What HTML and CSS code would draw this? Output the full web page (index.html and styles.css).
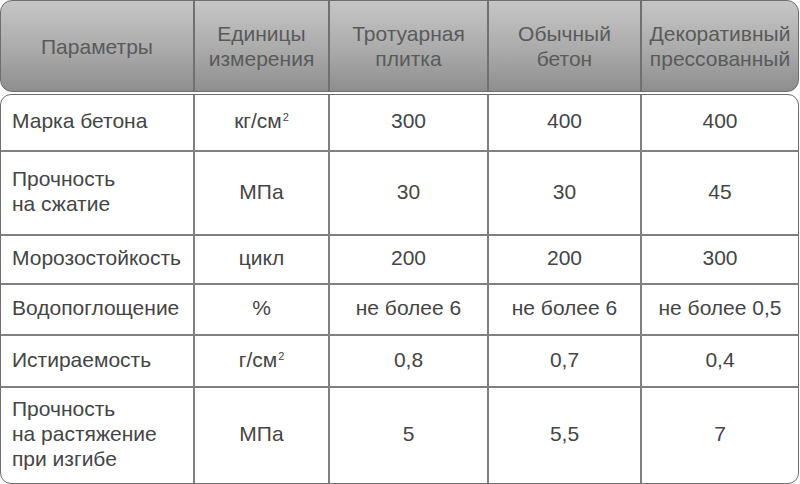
FILE: index.html
```html
<!DOCTYPE html>
<html lang="ru">
<head>
<meta charset="utf-8">
<link rel="stylesheet" href="styles.css">
</head>
<body>
<div class="table">
  <div class="head grid">
    <div class="cell">Параметры</div>
    <div class="cell">Единицы<br>измерения</div>
    <div class="cell">Тротуарная<br>плитка</div>
    <div class="cell">Обычный<br>бетон</div>
    <div class="cell">Декоративный<br>прессованный</div>
  </div>
  <div class="body">
    <div class="grid row r1">
      <div class="cell first">Марка бетона</div>
      <div class="cell"><span>кг/см<sup>2</sup></span></div>
      <div class="cell">300</div>
      <div class="cell">400</div>
      <div class="cell">400</div>
    </div>
    <div class="grid row r2">
      <div class="cell first">Прочность<br>на сжатие</div>
      <div class="cell">МПа</div>
      <div class="cell">30</div>
      <div class="cell">30</div>
      <div class="cell">45</div>
    </div>
    <div class="grid row r3">
      <div class="cell first">Морозостойкость</div>
      <div class="cell">цикл</div>
      <div class="cell">200</div>
      <div class="cell">200</div>
      <div class="cell">300</div>
    </div>
    <div class="grid row r4">
      <div class="cell first">Водопоглощение</div>
      <div class="cell">%</div>
      <div class="cell">не более 6</div>
      <div class="cell">не более 6</div>
      <div class="cell">не более 0,5</div>
    </div>
    <div class="grid row r5">
      <div class="cell first">Истираемость</div>
      <div class="cell"><span>г/см<sup>2</sup></span></div>
      <div class="cell">0,8</div>
      <div class="cell">0,7</div>
      <div class="cell">0,4</div>
    </div>
    <div class="grid row r6">
      <div class="cell first">Прочность<br>на растяжение<br>при изгибе</div>
      <div class="cell">МПа</div>
      <div class="cell">5</div>
      <div class="cell">5,5</div>
      <div class="cell">7</div>
    </div>
  </div>
</div>
</body>
</html>
```

FILE: styles.css
```css
html, body {
  margin: 0;
  padding: 0;
  background: #ffffff;
}
body {
  font-family: "Liberation Sans", Arial, sans-serif;
  font-size: 21px;
  line-height: 25px;
}
.table {
  width: 799px;
}
.grid {
  display: grid;
  grid-template-columns: 192px 135px 159px 153px 1fr;
}
.head {
  height: 90px;
  border: 1px solid #6e6e6e;
  border-radius: 12px;
  background: linear-gradient(to bottom, #c6c6c6 0%, #aaaaaa 55%, #8e8e8e 100%);
  color: #5a5a5a;
  overflow: hidden;
}
.head .cell {
  display: flex;
  align-items: center;
  justify-content: center;
  text-align: center;
  border-left: 2px solid #707070;
}
.head .cell:first-child {
  border-left: none;
}
.body {
  margin-top: 2px;
  border: 1px solid #6e6e6e;
  border-radius: 11px;
  color: #454545;
  overflow: hidden;
}
.row {
  border-top: 2px solid #808080;
}
.row.r1 { border-top: none; height: 55px; }
.row.r2 { height: 82px; }
.row.r3 { height: 47px; }
.row.r4 { height: 49px; }
.row.r5 { height: 50px; }
.row.r6 { height: 95px; }
.cell {
  display: flex;
  align-items: center;
  justify-content: center;
  text-align: center;
  border-left: 2px solid #808080;
}
.body .cell {
  padding-bottom: 4px;
}
.cell.first {
  border-left: none;
  justify-content: flex-start;
  text-align: left;
  padding-left: 11px;
}
sup {
  font-size: 11px;
  line-height: 0;
  vertical-align: 7px;
  margin-left: 1px;
}
```
